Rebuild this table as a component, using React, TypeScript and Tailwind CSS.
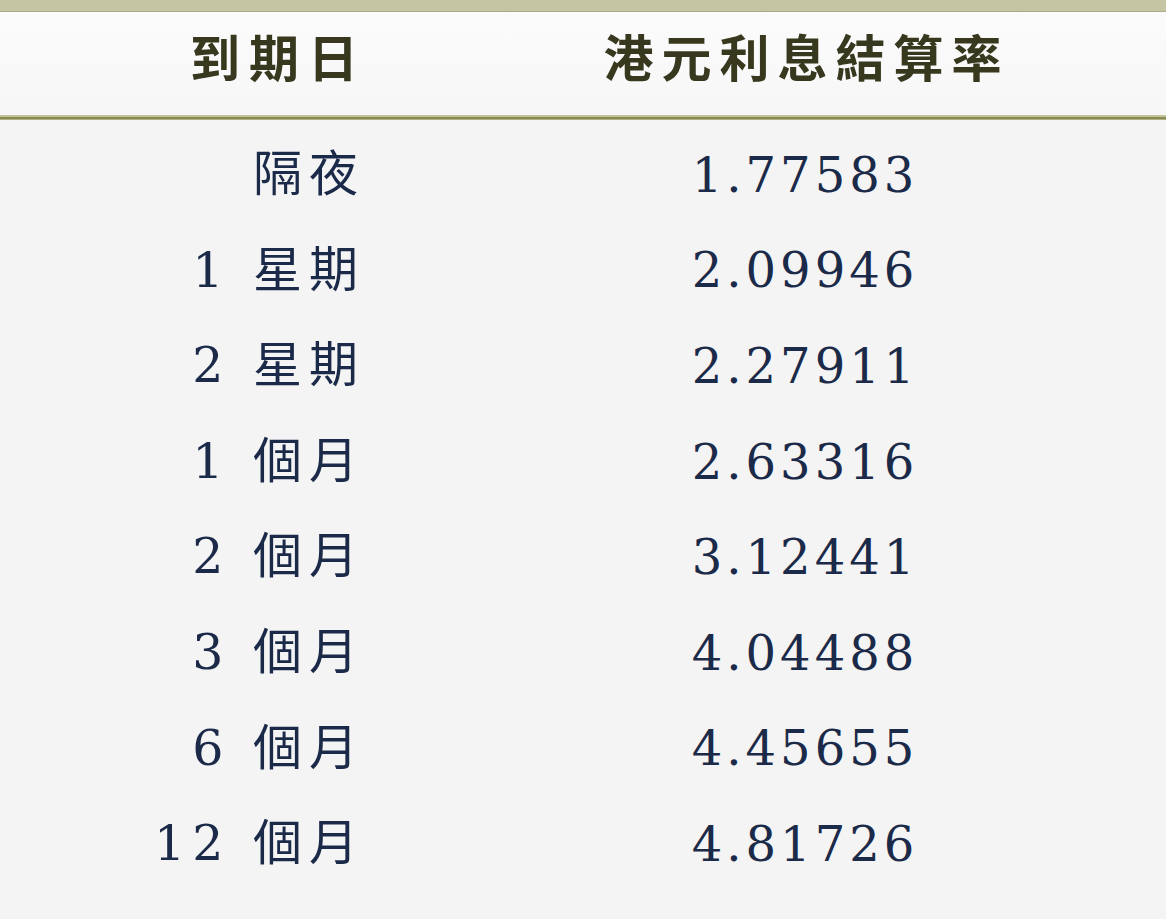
const rows: { term: string; rate: string }[] = [
	{ term: "隔夜", rate: "1.77583" },
	{ term: "1 星期", rate: "2.09946" },
	{ term: "2 星期", rate: "2.27911" },
	{ term: "1 個月", rate: "2.63316" },
	{ term: "2 個月", rate: "3.12441" },
	{ term: "3 個月", rate: "4.04488" },
	{ term: "6 個月", rate: "4.45655" },
	{ term: "12 個月", rate: "4.81726" },
];

const cjk = "font-['Noto_Sans_CJK_TC','Noto_Sans',sans-serif]";
const mixed = "font-['DejaVu_Serif','Noto_Sans_CJK_TC',serif]";

const App = () => {
	return (
		<div className="w-[1166px] h-[919px] bg-[#f4f4f4] overflow-hidden">
			<div className="h-[12px] bg-[#c5c5a3] border-b border-[#a9a98e]" />
			<div className="h-[103px] bg-gradient-to-b from-[#fbfbfb] to-[#f7f7f7] flex items-center pb-[18px]">
				<div
					className={`w-[367px] shrink-0 text-right text-[50px] leading-none font-bold tracking-[9px] text-[#38381f] ${cjk}`}
				>
					到期日
				</div>
				<div
					className={`flex-1 text-center text-[50px] leading-none font-bold tracking-[8px] pl-[80px] text-[#38381f] ${cjk}`}
				>
					港元利息結算率
				</div>
			</div>
			<div className="h-[2px] bg-[#c4c49a]" />
			<div className="h-[2px] bg-[#8a8a55]" />
			<div className="h-[1px] bg-[#b0b080]" />
			<div className="flex flex-col pt-[7px]">
				{rows.map((row) => (
					<div key={row.term} className="h-[95.6px] flex items-center">
						<div
							className={`w-[365px] shrink-0 text-right text-[49px] tracking-[7px] text-[#1b2a48] ${mixed}`}
						>
							{row.term}
						</div>
						<div className="flex-1 text-center pl-[79px] text-[48px] tracking-[4px] text-[#1b2a48] font-['DejaVu_Serif',serif]">
							{row.rate}
						</div>
					</div>
				))}
			</div>
		</div>
	);
};

export default App;
